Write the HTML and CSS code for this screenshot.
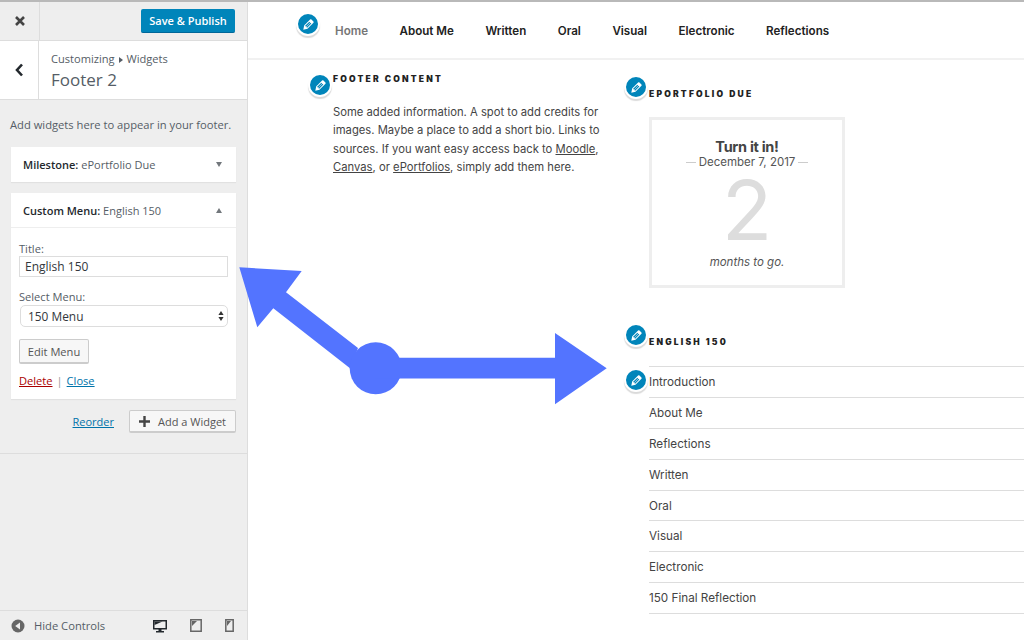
FILE: index.html
```html
<!DOCTYPE html>
<html lang="en">
<head>
    <meta charset="UTF-8">
    <title>Customizing Widgets: Footer 2</title>
    <link rel="stylesheet" href="styles.css">
</head>
<body>
    <svg class="icon-defs" width="0" height="0">
        <symbol id="pencil" viewBox="0 0 20 20">
            <path d="M13.89 3.39l2.71 2.72c.46.46.42 1.24.03 1.64l-8.01 8.02-5.56 1.16 1.16-5.58s7.6-7.63 7.99-8.03c.39-.39 1.22-.39 1.68.07zm-2.73 2.79l-5.59 5.61 1.11 1.11 5.54-5.65zm-2.97 8.23l5.58-5.6-1.07-1.08-5.59 5.6z"/>
        </symbol>
    </svg>

    <div class="page">
        <aside class="sidebar">
            <div class="top-bar">
                <div class="close-btn">
                    <svg width="12" height="12" viewBox="0 0 12 12"><path d="M2 2l8 8M10 2l-8 8" stroke="#444" stroke-width="2.6"/></svg>
                </div>
                <div class="publish-btn">Save &amp; Publish</div>
            </div>

            <div class="section-head">
                <div class="back-btn">
                    <svg width="10" height="14" viewBox="0 0 10 14"><path d="M8 1.5L3 7l5 5.5" fill="none" stroke="#23282d" stroke-width="2.6"/></svg>
                </div>
                <div class="section-title">
                    <div class="crumb">Customizing <span class="crumb-arrow"></span> Widgets</div>
                    <div class="section-name">Footer 2</div>
                </div>
            </div>

            <div class="panel">
                <p class="panel-desc">Add widgets here to appear in your footer.</p>

                <div class="widget-card">
                    <div class="widget-top">
                        <span><b>Milestone:</b> ePortfolio Due</span>
                        <span class="caret caret-down"></span>
                    </div>
                </div>

                <div class="widget-card">
                    <div class="widget-top widget-top-open">
                        <span><b>Custom Menu:</b> English 150</span>
                        <span class="caret caret-up"></span>
                    </div>
                    <div class="widget-form">
                        <label class="field-label">Title:</label>
                        <div class="text-input">English 150</div>
                        <label class="field-label field-label-select">Select Menu:</label>
                        <div class="select-input">
                            <span>150 Menu</span>
                            <svg width="6" height="12" viewBox="0 0 6 12"><path d="M3 1l2.6 4H.4zM3 11L.4 7h5.2z" fill="#333"/></svg>
                        </div>
                        <div class="edit-btn">Edit Menu</div>
                        <div class="widget-links">
                            <a class="link-delete">Delete</a><span class="sep">|</span><a class="link-close">Close</a>
                        </div>
                    </div>
                </div>

                <div class="panel-actions">
                    <a class="link-close">Reorder</a>
                    <div class="add-btn">
                        <svg width="11" height="11" viewBox="0 0 11 11"><path d="M5.5 0v11M0 5.5h11" stroke="#444" stroke-width="2.4"/></svg>
                        <span>Add a Widget</span>
                    </div>
                </div>
            </div>

            <div class="sidebar-foot">
                <div class="hide-controls">
                    <svg width="14" height="14" viewBox="0 0 14 14"><circle cx="7" cy="7" r="6.5" fill="#666"/><path d="M9 3.5v7L4.2 7z" fill="#eee"/></svg>
                    <span>Hide Controls</span>
                </div>
                <div class="devices">
                    <svg width="14" height="14" viewBox="0 0 14 14"><path d="M0 1h14v9.5H8.5V12H11v1.500H3V12h2.500v-1.500H0z" fill="#23282d"/><path d="M1.500 2.500h11v6.500h-11z" fill="#eee"/><path d="M1.500 2.500h8L1.500 6z" fill="#23282d"/></svg>
                    <svg width="12" height="13" viewBox="0 0 12 13"><path d="M.8.800h10.400v11.400H.8z" fill="none" stroke="#666" stroke-width="1.500"/><path d="M2 2h5L2 7z" fill="#666"/></svg>
                    <svg width="9" height="13" viewBox="0 0 9 13"><path d="M.8.800h7.400v11.400H.8z" fill="none" stroke="#666" stroke-width="1.500"/><path d="M2 2h4L2 7z" fill="#666"/></svg>
                </div>
            </div>
        </aside>

        <main class="preview">
            <nav class="site-nav">
                <a class="edit-badge badge-nav"><svg><use href="#pencil"/></svg></a>
                <a class="nav-current">Home</a>
                <a>About Me</a>
                <a>Written</a>
                <a>Oral</a>
                <a>Visual</a>
                <a>Electronic</a>
                <a>Reflections</a>
            </nav>

            <div class="footer-cols">
                <section class="footer-left">
                    <a class="edit-badge badge-footer"><svg><use href="#pencil"/></svg></a>
                    <h2 class="widget-title">Footer Content</h2>
                    <p class="footer-text">Some added information. A spot to add credits for images. Maybe a place to add a short bio. Links to sources. If you want easy access back to <u>Moodle</u>, <u>Canvas</u>, or <u>ePortfolios</u>, simply add them here.</p>
                </section>

                <section class="footer-right">
                    <div class="due-widget">
                        <a class="edit-badge badge-due"><svg><use href="#pencil"/></svg></a>
                        <h2 class="widget-title">ePortfolio Due</h2>
                        <div class="milestone">
                            <div class="milestone-title">Turn it in!</div>
                            <div class="milestone-date"><span>December 7, 2017</span></div>
                            <div class="milestone-count">2</div>
                            <div class="milestone-note">months to go.</div>
                        </div>
                    </div>

                    <div class="menu-widget">
                        <a class="edit-badge badge-menu"><svg><use href="#pencil"/></svg></a>
                        <h2 class="widget-title">English 150</h2>
                        <ul class="menu-list">
                            <li><a class="edit-badge badge-item"><svg><use href="#pencil"/></svg></a>Introduction</li>
                            <li>About Me</li>
                            <li>Reflections</li>
                            <li>Written</li>
                            <li>Oral</li>
                            <li>Visual</li>
                            <li>Electronic</li>
                            <li>150 Final Reflection</li>
                        </ul>
                    </div>
                </section>
            </div>
        </main>
    </div>

    <!-- callout arrows drawn over the screenshot -->
    <svg class="callout" width="1024" height="640" viewBox="0 0 1024 640">
        <path d="M239.300 267.300L301.700 271L286 292.300L358 348L350 368.300L273.300 308.300L257.300 327.300z" fill="#5374ff"/>
        <circle cx="375.700" cy="368.300" r="26" fill="#5374ff"/>
        <path d="M375 357.800H555V333L606.700 368.300L555 404.300V378.400H375z" fill="#5374ff"/>
    </svg>
</body>
</html>
```

FILE: styles.css
```css
* {
    box-sizing: border-box;
}

body {
    margin: 0;
    width: 1024px;
    height: 640px;
    overflow: hidden;
    position: relative;
    background-color: #fff;
    font-family: "Open Sans", sans-serif;
}

.icon-defs {
    display: none;
}

.page {
    display: flex;
    height: 640px;
    border-top: 2px solid #b9b9b9;
}

/* sidebar */
.sidebar {
    width: 248px;
    flex: none;
    display: flex;
    flex-direction: column;
    background-color: #eee;
    border-right: 1px solid #ddd;
    color: #555d66;
}

.top-bar {
    height: 39px;
    flex: none;
    display: flex;
    justify-content: space-between;
    align-items: center;
    padding-right: 12px;
    border-bottom: 1px solid #ddd;
}

.close-btn {
    width: 40px;
    height: 38px;
    display: flex;
    align-items: center;
    justify-content: center;
    border-right: 1px solid #ddd;
}

.publish-btn {
    width: 94px;
    height: 24px;
    display: flex;
    align-items: center;
    justify-content: center;
    margin-top: -1px;
    background-color: #0085ba;
    border-radius: 2px;
    border-bottom: 1px solid #006799;
    color: #fff;
    font-size: 11px;
    font-weight: 600;
}

.section-head {
    height: 59px;
    flex: none;
    display: flex;
    border-bottom: 1px solid #ddd;
    background-color: #fff;
}

.back-btn {
    width: 39px;
    display: flex;
    align-items: center;
    justify-content: center;
    border-right: 1px solid #ddd;
}

.section-title {
    padding: 10px 0 0 12px;
}

.crumb {
    font-size: 11.100px;
    line-height: 16px;
}

.crumb-arrow {
    display: inline-block;
    border-left: 4px solid #555d66;
    border-top: 3px solid transparent;
    border-bottom: 3px solid transparent;
    margin: 0 1px;
}

.section-name {
    font-size: 17px;
    line-height: 25px;
}

.panel {
    height: 354px;
    flex: none;
    padding: 18px 11px 0;
    border-bottom: 1px solid #ddd;
}

.panel-desc {
    margin: 0 0 15px -1px;
    font-size: 11.200px;
    line-height: 14px;
    white-space: nowrap;
}

.widget-card {
    width: 225px;
    margin-bottom: 11px;
    background-color: #fff;
    box-shadow: 0 1px 1px rgba(0, 0, 0, 0.05);
}

.widget-top {
    height: 35px;
    display: flex;
    justify-content: space-between;
    align-items: center;
    padding: 0 14px 0 12px;
    font-size: 11px;
    color: #555d66;
}

.widget-top b {
    font-weight: 600;
    color: #23282d;
}

.widget-top-open {
    border-bottom: 1px solid #eee;
}

.caret {
    border-left: 3.500px solid transparent;
    border-right: 3.500px solid transparent;
}

.caret-down {
    border-top: 5px solid #72777c;
}

.caret-up {
    border-bottom: 5px solid #72777c;
}

.widget-form {
    height: 171px;
    padding: 14px 8px 0;
    font-size: 11.100px;
}

.field-label {
    display: block;
    line-height: 14px;
}

.field-label-select {
    margin-top: 13px;
}

.text-input {
    height: 21px;
    padding: 0 5px;
    line-height: 20px;
    font-size: 12px;
    border: 1px solid #ddd;
    color: #32373c;
}

.select-input {
    height: 22px;
    margin: 1px 0 0 1px;
    display: flex;
    justify-content: space-between;
    align-items: center;
    padding: 0 3px 0 7px;
    font-size: 11.900px;
    border: 1px solid #ddd;
    border-radius: 5px;
    color: #32373c;
}

.edit-btn {
    width: 70px;
    height: 25px;
    margin-top: 12px;
    display: flex;
    align-items: center;
    justify-content: center;
    background-color: #f7f7f7;
    border: 1px solid #ccc;
    border-bottom-width: 2px;
    border-radius: 2px;
    color: #555;
}

.widget-links {
    margin-top: 9px;
    line-height: 15px;
}

.link-delete {
    color: #a00;
    text-decoration: underline;
}

.link-close {
    color: #0073aa;
    text-decoration: underline;
}

.sep {
    margin: 0 4px;
    color: #999;
}

.panel-actions {
    display: flex;
    justify-content: flex-end;
    align-items: center;
    gap: 15px;
    font-size: 11px;
}

.add-btn {
    width: 107px;
    height: 23px;
    display: flex;
    align-items: center;
    justify-content: center;
    gap: 8px;
    background-color: #f7f7f7;
    border: 1px solid #ccc;
    border-bottom-width: 2px;
    border-radius: 2px;
    color: #555;
}

.sidebar-foot {
    margin-top: auto;
    height: 30px;
    display: flex;
    justify-content: space-between;
    align-items: center;
    padding: 0 12px 0 11px;
    border-top: 1px solid #ddd;
    font-size: 11.200px;
}

.hide-controls {
    display: flex;
    align-items: center;
    gap: 9px;
}

.devices {
    display: flex;
    align-items: center;
    gap: 23px;
    margin-right: 1px;
}

/* preview side */
.preview {
    flex: 1;
    min-width: 0;
    font-family: Inter, sans-serif;
    color: #444;
}

.site-nav {
    position: relative;
    height: 58px;
    display: flex;
    align-items: center;
    gap: 31.500px;
    padding: 2px 0 0 87px;
    border-bottom: 2px solid #f1f1f1;
    font-size: 11.600px;
    font-weight: 600;
    color: #222;
}

.nav-current {
    color: #767676;
}

.edit-badge {
    position: absolute;
    width: 24px;
    height: 24px;
    display: flex;
    align-items: center;
    justify-content: center;
    background-color: #0085ba;
    border: 2px solid #fff;
    border-radius: 50%;
    box-shadow: 0 2px 1px rgba(0, 0, 0, 0.15);
}

.edit-badge svg {
    width: 15px;
    height: 15px;
    fill: #fff;
}

.badge-nav {
    left: 48px;
    top: 10px;
}

.footer-cols {
    display: flex;
    padding-left: 85px;
}

.footer-left {
    position: relative;
    width: 316px;
    flex: none;
    padding-top: 13px;
}

.footer-right {
    flex: 1;
    min-width: 0;
    padding-top: 28px;
}

.badge-footer {
    left: -25px;
    top: 13px;
}

.widget-title {
    margin: 0;
    font-family: Inter, sans-serif;
    font-size: 8.500px;
    font-weight: 900;
    line-height: 13px;
    letter-spacing: 2.200px;
    text-transform: uppercase;
    color: #222;
}

.footer-text {
    width: 272px;
    margin: 17px 0 0;
    font-size: 11.250px;
    line-height: 18.400px;
}

.due-widget,
.menu-widget {
    position: relative;
}

.badge-due {
    left: -25px;
    top: -13px;
}

.milestone {
    width: 196px;
    height: 171px;
    margin-top: 16px;
    padding-top: 18px;
    border: 3px solid #eee;
    text-align: center;
}

.milestone-title {
    font-size: 14.500px;
    font-weight: 700;
    line-height: 17px;
    letter-spacing: -0.3px;
}

.milestone-date {
    font-size: 11.500px;
    line-height: 15px;
    color: #555;
    display: flex;
    justify-content: center;
    align-items: center;
    gap: 3px;
}

.milestone-date::before,
.milestone-date::after {
    content: "";
    width: 10px;
    height: 1px;
    background-color: #ccc;
}

.milestone-count {
    height: 80px;
    font-size: 83px;
    font-weight: 400;
    line-height: 80px;
    color: #ddd;
}

.milestone-note {
    margin-top: 5px;
    font-size: 11.500px;
    font-style: italic;
    line-height: 15px;
    color: #555;
}

.menu-widget {
    margin-top: 48px;
}

.badge-menu {
    left: -25px;
    top: -13px;
}

.menu-list {
    list-style: none;
    margin: 17px 0 0;
    padding: 0;
    border-top: 1px solid #ddd;
}

.menu-list li {
    position: relative;
    height: 30.900px;
    display: flex;
    align-items: center;
    font-size: 11.700px;
    border-bottom: 1px solid #ddd;
}

.badge-item {
    left: -25px;
    top: 1px;
}

/* arrows lie over both the sidebar and the preview */
.callout {
    position: absolute;
    left: 0;
    top: 0;
    pointer-events: none;
}
```
